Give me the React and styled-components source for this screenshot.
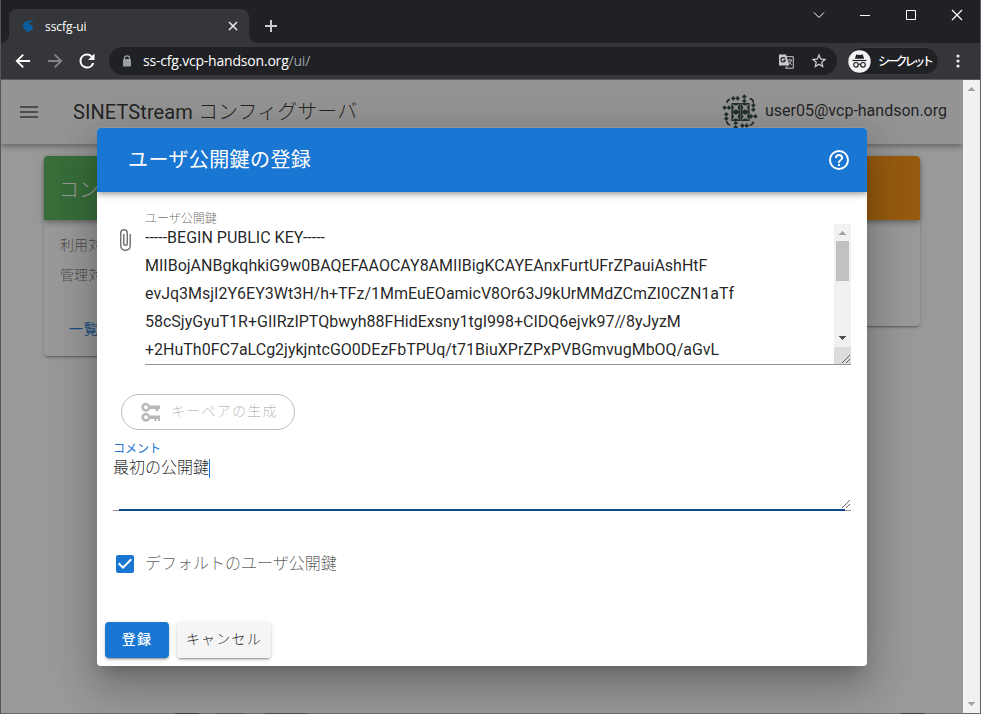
import React from "react";
import styled, { createGlobalStyle, css } from "styled-components";

const GlobalStyle = createGlobalStyle`
  * { box-sizing: border-box; }
  html, body { margin: 0; padding: 0; overflow: hidden; }
  body { font-family: Roboto, "Noto Sans CJK JP", sans-serif; font-size: 16px; }
`;

const elevation = "0 3px 1px -2px rgba(0,0,0,.2), 0 2px 2px 0 rgba(0,0,0,.14), 0 1px 5px 0 rgba(0,0,0,.12)";
const barElevation = "0 2px 4px -1px rgba(0,0,0,.2), 0 4px 5px 0 rgba(0,0,0,.14), 0 1px 10px 0 rgba(0,0,0,.12)";

const Window = styled.div`
  width: 981px;
  height: 714px;
  display: flex;
  flex-direction: column;
  overflow: hidden;
  background: #202124;
  border-left: 1px solid #55565a;
  border-right: 1px solid #606063;
`;

/* ---- browser chrome ---- */
const TitleBar = styled.div`
  height: 43px;
  flex: none;
  display: flex;
  align-items: flex-start;
  background: #202124;
`;
const Tab = styled.div`
  position: relative;
  width: 240px;
  height: 34px;
  margin: 9px 0 0 8px;
  padding: 0 10px 0 13px;
  display: flex;
  align-items: center;
  background: #35363a;
  border-radius: 8px 8px 0 0;
  &::before, &::after {
    content: "";
    position: absolute;
    bottom: 0;
    width: 8px;
    height: 8px;
  }
  &::before { left: -8px; background: radial-gradient(circle at 0 0, transparent 7.5px, #35363a 8px); }
  &::after { right: -8px; background: radial-gradient(circle at 100% 0, transparent 7.5px, #35363a 8px); }
`;
const TabTitle = styled.span`
  flex: 1;
  margin: 1px 0 0 10px;
  color: #fff;
  font: 12px/18px "Open Sans", sans-serif;
  letter-spacing: -0.06px;
`;
const NewTab = styled.div`
  margin: 19px 0 0 15px;
  height: 14px;
  display: flex;
`;
const Caption = styled.div`
  margin-left: auto;
  padding: 9px 17px 0 0;
  display: flex;
  gap: 34px;
`;
const Toolbar = styled.div`
  height: 37px;
  flex: none;
  display: flex;
  align-items: center;
  background: #35363a;
  border-bottom: 1px solid #5a5b5e;
`;
const NavIcons = styled.div`
  width: 108px;
  padding-left: 12px;
  display: flex;
  gap: 12px;
`;
const Omnibox = styled.div`
  width: 728px;
  height: 28px;
  padding: 0 9px 0 13px;
  display: flex;
  align-items: center;
  background: #202124;
  border-radius: 14px;
`;
const Url = styled.span`
  flex: 1;
  margin-left: 11px;
  color: #fff;
  font: 14px/20px "Open Sans", sans-serif;
  letter-spacing: -0.2px;
`;
const UrlPath = styled.span`
  color: #9aa0a6;
`;
const OmniIcons = styled.div`
  display: flex;
  align-items: center;
  gap: 16px;
`;
const Incognito = styled.div`
  width: 92px;
  height: 28px;
  margin-left: 10px;
  display: flex;
  align-items: center;
  background: #202124;
  border: 1px solid #3c3d41;
  border-radius: 14px;
`;
const IncognitoLabel = styled.span`
  margin: -1px 0 0 7px;
  color: #fff;
  font: 500 12px/18px "Noto Sans CJK JP", sans-serif;
  letter-spacing: -3.2px;
  white-space: nowrap;
`;
const MenuDots = styled.svg`
  margin-left: 17px;
`;

/* ---- page ---- */
const Viewport = styled.div`
  flex: 1;
  min-height: 0;
  display: flex;
`;
const Page = styled.main`
  position: relative;
  width: 962px;
  overflow: hidden;
  background: #fff;
`;
const AppBar = styled.header`
  height: 64px;
  padding: 0 16px;
  display: flex;
  align-items: center;
  background: #f5f5f5;
  box-shadow: ${barElevation};
`;
const AppTitle = styled.h1`
  flex: 1;
  margin: 0 0 0 32px;
  color: rgba(0, 0, 0, .87);
  font-size: 20px;
  font-weight: 400;
  line-height: 30px;
  letter-spacing: .08px;
`;
const Light = styled.span`
  font-weight: 300;
`;
const UserName = styled.span`
  margin: -2px 0 0 7px;
  color: rgba(0, 0, 0, .87);
  font-size: 16px;
  line-height: 24px;
`;
const CardRow = styled.section`
  padding: 12px 43px;
  display: flex;
  justify-content: space-between;
  align-items: flex-start;
`;
const Card = styled.article`
  width: 276px;
  height: ${(p) => p.$height}px;
  background: #fff;
  border-radius: 4px;
  box-shadow: ${elevation};
`;
const CardHead = styled.div`
  height: 64px;
  padding: 0 15px;
  display: flex;
  align-items: center;
  color: #fff;
  background: ${(p) => p.$color};
  border-radius: 4px 4px 0 0;
  box-shadow: ${barElevation};
  font-size: 20px;
  font-weight: 300;
`;
const CardText = styled.div`
  padding: 10px 16px 0;
  color: rgba(0, 0, 0, .6);
  font-size: 14px;
  font-weight: 300;
  line-height: 30px;
  letter-spacing: .1px;
`;
const CardLink = styled.div`
  padding: 29px 25px 0;
  color: #1976d2;
  font-size: 14px;
  line-height: 20px;
  letter-spacing: .8px;
`;
const Overlay = styled.div`
  position: absolute;
  inset: 0;
  display: flex;
  align-items: center;
  justify-content: center;
  background: rgba(33, 33, 33, .46);
`;
const ScrollTrack = styled.div`
  width: 17px;
  height: ${(p) => p.$height}px;
  display: flex;
  flex-direction: column;
  align-items: center;
  background: #f1f1f1;
`;
const Thumb = styled.div`
  width: 13px;
  height: 40px;
  background: #c1c1c1;
`;
const Gap = styled.div`
  flex: 1;
`;
const WindowEdge = styled.div`
  height: 1px;
  flex: none;
  background: linear-gradient(90deg, #6b6a6b 174px, #444 174px 198px, #6b6a6b 198px 215px, #555 215px 244px, #6b6a6b 244px 264px, #4c4c4c 264px 306px, #6b6a6b 306px 900px, #444 900px 924px, #6b6a6b 924px);
`;

/* ---- dialog ---- */
const Dialog = styled.div`
  width: 770px;
  height: 538px;
  margin-top: 1px;
  overflow: hidden;
  background: #fff;
  border-radius: 4px;
`;
const DialogShadow = styled.div`
  border-radius: 4px;
  box-shadow: 0 11px 15px -7px rgba(0,0,0,.2), 0 24px 38px 3px rgba(0,0,0,.14), 0 9px 46px 8px rgba(0,0,0,.12);
`;
const DialogHead = styled.div`
  height: 64px;
  padding: 0 16px 0 31px;
  display: flex;
  align-items: center;
  justify-content: space-between;
  color: #fff;
  background: #1976d2;
  box-shadow: ${barElevation};
`;
const DialogTitle = styled.h2`
  margin: 0;
  font-size: 20px;
  font-weight: 400;
  line-height: 30px;
  letter-spacing: .4px;
`;
const Form = styled.div`
  height: 422px;
  padding: 20px 16px 0;
`;
const Field = styled.div`
  display: flex;
`;
const FieldIcon = styled.div`
  width: 32px;
  padding-top: 16px;
`;
const FieldBody = styled.div`
  flex: 1;
`;
const FieldLabel = styled.div`
  height: 12px;
  color: ${(p) => (p.$active ? "#1976d2" : "rgba(0,0,0,.6)")};
  font-size: 12px;
  font-weight: ${(p) => (p.$active ? 400 : 300)};
  line-height: 14px;
`;
const KeyArea = styled.div`
  height: 141px;
  display: flex;
  border-bottom: 1px solid #949494;
`;
const KeyText = styled.pre`
  flex: 1;
  margin: 0;
  overflow: hidden;
  color: rgba(0, 0, 0, .87);
  font: 16px/28px Roboto, sans-serif;
`;
const Corner = styled.div`
  width: 17px;
  height: 17px;
  display: flex;
  align-items: flex-end;
  justify-content: flex-end;
  background: #dcdcdc;
`;
const KeyPairButton = styled.button`
  width: 174px;
  height: 36px;
  margin: 29px 0 0 8px;
  padding: 0 0 2px 17px;
  display: flex;
  align-items: center;
  gap: 8px;
  color: rgba(0, 0, 0, .3);
  background: none;
  border: 1px solid #bdbdbd;
  border-radius: 18px;
  font: 300 14px/20px Roboto, "Noto Sans CJK JP", sans-serif;
  letter-spacing: 1.25px;
  white-space: nowrap;
`;
const KeyIcon = styled.svg`
  margin: 2px 0 0;
  flex: none;
`;
const CommentWrap = styled.div`
  margin-top: 12px;
`;
const CommentArea = styled.div`
  height: 55px;
  display: flex;
  justify-content: space-between;
  color: rgba(0, 0, 0, .87);
  font-weight: 300;
  line-height: 24px;
`;
const CommentValue = styled.div`
  height: 28px;
  display: flex;
  align-items: center;
`;
const Caret = styled.span`
  width: 1px;
  height: 19px;
  background: #1976d2;
`;
const Grip = styled.svg`
  align-self: flex-end;
  display: block;
`;
const Underline = styled.div`
  height: 2px;
  padding: 0 6px;
  background: linear-gradient(transparent 1px, #949494 1px);
  &::after {
    content: "";
    display: block;
    height: 2px;
    background: #0d4a87;
  }
`;
const CheckRow = styled.label`
  height: 24px;
  margin-top: 41px;
  display: flex;
  align-items: center;
  gap: 8px;
  color: rgba(0, 0, 0, .65);
  font-size: 16px;
  font-weight: 300;
  line-height: 24px;
`;
const CheckLabel = styled.span`
  margin-top: -1px;
`;
const Actions = styled.div`
  padding: 8px;
  display: flex;
  gap: 8px;
`;
const Button = styled.button`
  width: ${(p) => p.$width}px;
  height: 36px;
  padding: 0 0 2px;
  border: 0;
  border-radius: 4px;
  box-shadow: ${elevation};
  font: 500 14px/20px Roboto, "Noto Sans CJK JP", sans-serif;
  letter-spacing: 1.25px;
  ${(p) =>
    p.$primary
      ? css`color: #fff; background: #1976d2;`
      : css`color: rgba(0, 0, 0, .87); background: #f5f5f5; font-weight: 300;`}
`;

const Icon = ({ d, size = 24, color = "currentColor" }) => (
  <svg width={size} height={size} viewBox="0 0 24 24" fill={color}><path d={d} /></svg>
);

const paths = {
  back: "M20.500 10.800H7.330l5.790-5.790L11.500 3.500 3 12l8.500 8.500 1.610-1.510L7.330 13.200H20.500z",
  forward: "M12.500 3.500l-1.610 1.510L16.670 10.800H3.500v2.400h13.170l-5.780 5.790L12.500 20.500 21 12z",
  reload: "M18.300 5.700A8.900 8.900 0 0 0 12 3a9 9 0 1 0 8.700 11.300h-2.500A6.600 6.600 0 1 1 12 5.400c1.830 0 3.450.76 4.640 1.960L13.200 10.800H21V3l-2.700 2.700z",
  menu: "M3 6h18v2H3V6m0 5h18v2H3v-2m0 5h18v2H3v-2z",
  clip: "M16.5,6V17.5A4,4 0 0,1 12.5,21.5A4,4 0 0,1 8.5,17.5V5A2.5,2.5 0 0,1 11,2.5A2.5,2.5 0 0,1 13.5,5V15.5A1,1 0 0,1 12.5,16.5A1,1 0 0,1 11.5,15.5V6H10V15.5A2.5,2.5 0 0,0 12.5,18A2.5,2.5 0 0,0 15,15.5V5A4,4 0 0,0 11,1A4,4 0 0,0 7,5V17.5A5.5,5.5 0 0,0 12.5,23A5.5,5.5 0 0,0 18,17.5V6H16.5Z",
  help: "M11 18h2v-2h-2v2m1-16A10 10 0 0 0 2 12a10 10 0 0 0 10 10 10 10 0 0 0 10-10A10 10 0 0 0 12 2m0 18c-4.41 0-8-3.59-8-8s3.59-8 8-8 8 3.59 8 8-3.59 8-8 8m0-14a4 4 0 0 0-4 4h2a2 2 0 0 1 2-2 2 2 0 0 1 2 2c0 2-3 1.75-3 5h2c0-2.25 3-2.5 3-5a4 4 0 0 0-4-4z",
  checkbox: "M10,17L5,12L6.41,10.58L10,14.17L17.59,6.58L19,8M19,3H5C3.89,3 3,3.89 3,5V19A2,2 0 0,0 5,21H19A2,2 0 0,0 21,19V5C21,3.89 20.1,3 19,3Z",
  star: "M22 9.24l-7.19-.62L12 2 9.19 8.63 2 9.24l5.46 4.73L5.82 21 12 17.27 18.18 21l-1.63-7.03L22 9.24zM12 15.4l-3.76 2.27 1-4.28-3.32-2.88 4.38-.38L12 6.1l1.71 4.04 4.38.38-3.32 2.88 1 4.28L12 15.4z",
};

const Arrow = ({ down, color }) => (
  <svg width="17" height="17" viewBox="0 0 17 17" shapeRendering="crispEdges">
    <path d={down ? "M5 6h7v1h-1v1h-1v1H9v1H8V9H7V8H6V7H5z" : "M5 11h7v-1h-1V9h-1V8H9V7H8v1H7v1H6v1H5z"} fill={color} />
  </svg>
);

const ResizeGrip = () => (
  <Grip width="10" height="10" viewBox="0 0 10 10" stroke="#555" strokeWidth=".9">
    <path d="M1 9L9 1M5 9l4-4" fill="none" />
  </Grip>
);

const tiles = [[92, 310], [120, 310], [92, 337], [120, 337]];
const dots = [[97, 295], [110, 295], [130, 290], [130, 303], [157, 316], [157, 329], [150, 349], [163, 349], [71, 323], [84, 323], [76, 343], [76, 356], [104, 369], [104, 382], [124, 377], [137, 377]];
const arcs = ["M78 309q0-9 9-11", "M146 296q11 2 11 12", "M77 363q1 10 10 12", "M146 376q10-2 11-11"];

const Identicon = () => (
  <svg width="36" height="36" viewBox="63 282 108 108">
    <g fill="#26403a">
      {tiles.map(([x, y]) => (
        <React.Fragment key={`${x}-${y}`}>
          <rect x={x - 1} y={y - 1} width="27" height="27" />
          <path fill="#f5f5f5" d={`M${x + 2} ${y + 2}l10.500 5.500 10.500-5.500-5.500 10.500 5.500 10.500-10.500-5.500-10.500 5.500 5.500-10.500z`} />
        </React.Fragment>
      ))}
      {dots.map(([x, y]) => (
        <path key={`${x}-${y}`} d={`M${x - 7} ${y}l7-7 7 7-7 7z`} />
      ))}
    </g>
    {arcs.map((d) => <path key={d} d={d} fill="none" stroke="#26403a" strokeWidth="5" />)}
  </svg>
);

const keyText = `-----BEGIN PUBLIC KEY-----
MIIBojANBgkqhkiG9w0BAQEFAAOCAY8AMIIBigKCAYEAnxFurtUFrZPauiAshHtF
evJq3MsjI2Y6EY3Wt3H/h+TFz/1MmEuEOamicV8Or63J9kUrMMdZCmZI0CZN1aTf
58cSjyGyuT1R+GIIRzIPTQbwyh88FHidExsny1tgI998+CIDQ6ejvk97//8yJyzM
+2HuTh0FC7aLCg2jykjntcGO0DEzFbTPUq/t71BiuXPrZPxPVBGmvugMbOQ/aGvL`;

function BrowserChrome() {
  return (
    <>
      <TitleBar>
        <Tab>
          <svg width="13" height="13" viewBox="0 0 13 13">
            <path d="M12.500 1C7 0 1.200 1.500 1 4.400c0 1 1 1.500 2 1.800-1 .6-2 .8-2.800.7C1.500 9.500 3.500 10.300 5.500 10.200c-.3.700-1 1.300-1.800 1.700C8 12.400 11 9.500 11 6.500 10.800 4.300 6.500 5 6.700 3.500 7 2.300 10.500 2.300 12.500 1z" fill="#0c5f9f" />
          </svg>
          <TabTitle>sscfg-ui</TabTitle>
          <svg width="12" height="12" viewBox="0 0 12 12" stroke="#e8eaed" strokeWidth="1.6"><path d="M2 2l8 8M10 2l-8 8" /></svg>
        </Tab>
        <NewTab>
          <svg width="14" height="14" viewBox="0 0 14 14" stroke="#c9cacd" strokeWidth="2"><path d="M7 1v12M1 7h12" /></svg>
        </NewTab>
        <Caption>
          <svg width="12" height="12" viewBox="0 0 12 12" fill="none" stroke="#fff"><path d="M1 3.500l5 5 5-5" /></svg>
          <svg width="12" height="12" viewBox="0 0 12 12" fill="none" stroke="#fff"><path d="M1 6.500h10" /></svg>
          <svg width="12" height="12" viewBox="0 0 12 12" fill="none" stroke="#fff"><path d="M1.500 1.500h9v9h-9z" /></svg>
          <svg width="12" height="12" viewBox="0 0 12 12" fill="none" stroke="#fff" strokeWidth="1.200"><path d="M1 1l10 10M11 1L1 11" /></svg>
        </Caption>
      </TitleBar>
      <Toolbar>
        <NavIcons>
          <Icon d={paths.back} size={20} color="#fff" />
          <Icon d={paths.forward} size={20} color="#838488" />
          <Icon d={paths.reload} size={20} color="#fff" />
        </NavIcons>
        <Omnibox>
          <svg width="10" height="12" viewBox="0 0 10 12">
            <path d="M2.500 5V3a2.500 2.200 0 0 1 5 0v2" fill="none" stroke="#9aa0a6" strokeWidth="1.200" />
            <rect x="1" y="4" width="8" height="7.500" rx="1" fill="#9aa0a6" />
          </svg>
          <Url>ss-cfg.vcp-handson.org<UrlPath>/ui/</UrlPath></Url>
          <OmniIcons>
            <svg width="15" height="15" viewBox="0 0 15 15">
              <path d="M0 .5h7l3.500 11H0z" fill="#c9cacd" />
              <path d="M7 2.700h7.300v11.500H6.500l2-2.500" fill="none" stroke="#c9cacd" />
              <path d="M6 4.500A2.200 2.200 0 1 0 6.300 6.300H4.500" fill="none" stroke="#202124" strokeWidth="1.200" />
              <path d="M9 6h4.300M11 5v1M12.500 6c-.3 2-1.600 3.500-2.500 4.300M10 7.500c.8 1.400 1.600 2.600 2.800 3.300" fill="none" stroke="#c9cacd" strokeWidth=".9" />
            </svg>
            <Icon d={paths.star} size={18} color="#d5d6d9" />
          </OmniIcons>
        </Omnibox>
        <Incognito>
          <svg width="23" height="23" viewBox="0 0 23 23">
            <circle cx="11.500" cy="11.500" r="11.200" fill="#f1f3f4" />
            <path d="M8.200 4.500l3.300.6 3.300-.6 1.300 4.300H6.900z" fill="#202124" />
            <path d="M4.500 10.500h14" stroke="#202124" strokeWidth="1.200" />
            <g fill="none" stroke="#202124" strokeWidth="1.200">
              <circle cx="8" cy="14.800" r="2.300" /><circle cx="15" cy="14.800" r="2.300" /><path d="M10.300 14.500q1.200-.7 2.400 0" />
            </g>
          </svg>
          <IncognitoLabel>シークレット</IncognitoLabel>
        </Incognito>
        <MenuDots width="4" height="14" viewBox="0 0 4 14" fill="#e8eaed">
          <circle cx="2" cy="2" r="1.600" /><circle cx="2" cy="7" r="1.600" /><circle cx="2" cy="12" r="1.600" />
        </MenuDots>
      </Toolbar>
    </>
  );
}

function KeyDialog() {
  return (
    <DialogShadow>
      <Dialog>
        <DialogHead>
          <DialogTitle>ユーザ公開鍵の登録</DialogTitle>
          <Icon d={paths.help} />
        </DialogHead>
        <Form>
          <Field>
            <FieldIcon><Icon d={paths.clip} color="#757575" /></FieldIcon>
            <FieldBody>
              <FieldLabel>ユーザ公開鍵</FieldLabel>
              <KeyArea>
                <KeyText>{keyText}</KeyText>
                <div>
                  <ScrollTrack $height={123}>
                    <Arrow color="#a3a3a3" />
                    <Thumb />
                    <Gap />
                    <Arrow down color="#505050" />
                  </ScrollTrack>
                  <Corner><ResizeGrip /></Corner>
                </div>
              </KeyArea>
            </FieldBody>
          </Field>
          <KeyPairButton disabled>
            <KeyIcon width="24" height="24" viewBox="0 0 24 24" fill="#b8b8b8">
              <path fillRule="evenodd" d="M11 5.500h10V9h-1.500v2h-3V9H11a4.500 4.500 0 1 1 0-3.500zM7 5.200a2 2 0 1 0 0 4 2 2 0 0 0 0-4z" />
              <path fillRule="evenodd" d="M11 15.500h10V21h-2v-2h-1.500v2h-2v-2H11a4.500 4.500 0 1 1 0-3.500zM7 15.200a2 2 0 1 0 0 4 2 2 0 0 0 0-4z" />
            </KeyIcon>
            キーペアの生成
          </KeyPairButton>
          <CommentWrap>
            <FieldLabel $active>コメント</FieldLabel>
            <CommentArea>
              <CommentValue>最初の公開鍵<Caret /></CommentValue>
              <ResizeGrip />
            </CommentArea>
            <Underline />
          </CommentWrap>
          <CheckRow>
            <Icon d={paths.checkbox} color="#1976d2" />
            <CheckLabel>デフォルトのユーザ公開鍵</CheckLabel>
          </CheckRow>
        </Form>
        <Actions>
          <Button $primary $width={64}>登録</Button>
          <Button $width={94}>キャンセル</Button>
        </Actions>
      </Dialog>
    </DialogShadow>
  );
}

export default function App() {
  return (
    <>
      <GlobalStyle />
      <Window>
        <BrowserChrome />
        <Viewport>
          <Page>
            <AppBar>
              <Icon d={paths.menu} color="#757575" />
              <AppTitle>SINETStream <Light>コンフィグサーバ</Light></AppTitle>
              <Identicon />
              <UserName>user05@vcp-handson.org</UserName>
            </AppBar>
            <CardRow>
              <Card $height={200}>
                <CardHead $color="#4caf50">コン</CardHead>
                <CardText>利用対<br />管理対</CardText>
                <CardLink>一覧</CardLink>
              </Card>
              <Card $height={170}>
                <CardHead $color="#fb8c00" />
              </Card>
            </CardRow>
            <Overlay><KeyDialog /></Overlay>
          </Page>
          <ScrollTrack $height={633}>
            <Arrow color="#a3a3a3" />
            <Gap />
            <Arrow down color="#a3a3a3" />
          </ScrollTrack>
        </Viewport>
        <WindowEdge />
      </Window>
    </>
  );
}
